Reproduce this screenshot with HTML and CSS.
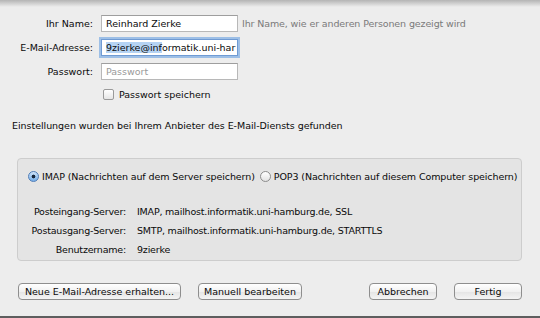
FILE: index.html
```html
<!DOCTYPE html>
<html lang="de">
<head>
    <meta charset="UTF-8">
    <title>E-Mail-Account hinzufügen</title>
    <link rel="stylesheet" href="styles.css">
</head>
<body>
    <div class="sheet">
        <!-- Account fields -->
        <div class="account-form">
            <label class="field-label">Ihr Name:</label>
            <div class="text-field">Reinhard Zierke</div>
            <span class="field-hint">Ihr Name, wie er anderen Personen gezeigt wird</span>

            <label class="field-label">E-Mail-Adresse:</label>
            <div class="text-field focused"><span class="selection">9zierke@inf</span>ormatik.uni-har</div>
            <span></span>

            <label class="field-label">Passwort:</label>
            <div class="text-field placeholder">Passwort</div>
            <span></span>

            <span></span>
            <div class="check-row">
                <span class="checkbox"></span>
                <span>Passwort speichern</span>
            </div>
        </div>

        <p class="status-text">Einstellungen wurden bei Ihrem Anbieter des E-Mail-Diensts gefunden</p>

        <!-- Server settings -->
        <div class="server-box">
            <div class="radio-row">
                <span class="radio-option"><span class="radio on"></span>IMAP (Nachrichten auf dem Server speichern)</span>
                <span class="radio-option"><span class="radio"></span>POP3 (Nachrichten auf diesem Computer speichern)</span>
            </div>
            <div class="server-info">
                <span class="info-label">Posteingang-Server:</span>
                <span>IMAP, mailhost.informatik.uni-hamburg.de, SSL</span>
                <span class="info-label">Postausgang-Server:</span>
                <span>SMTP, mailhost.informatik.uni-hamburg.de, STARTTLS</span>
                <span class="info-label">Benutzername:</span>
                <span>9zierke</span>
            </div>
        </div>

        <!-- Buttons -->
        <div class="button-bar">
            <div class="button-group">
                <button class="btn btn-wide">Neue E-Mail-Adresse erhalten...</button>
                <button class="btn btn-manual">Manuell bearbeiten</button>
            </div>
            <div class="button-group">
                <button class="btn btn-cancel">Abbrechen</button>
                <button class="btn btn-done">Fertig</button>
            </div>
        </div>
    </div>
</body>
</html>
```

FILE: styles.css
```css
* {
    margin: 0;
    padding: 0;
    box-sizing: border-box;
    font-family: 'DejaVu Sans', sans-serif;
}

:root {
    --window-bg: #ededed;
    --box-bg: #e4e4e4;
    --box-border: #cdcdcd;
    --text: #0a0a0a;
    --hint: #7a7a7a;
}

body {
    background-color: var(--window-bg);
    color: var(--text);
    font-size: 9.5px;
}

.sheet {
    width: 540px;
    height: 318px;
    background: linear-gradient(#b4b4b4, var(--window-bg) 7px);
    border-bottom: 2px solid #5e5e5e;
    padding-top: 15px;
}

/* Account fields */
.account-form {
    display: grid;
    grid-template-columns: 93px 137px auto;
    column-gap: 8px;
    row-gap: 7px;
    align-items: center;
}

.field-label {
    text-align: right;
}

.text-field {
    height: 17px;
    border: 1px solid #b8b8b8;
    border-top-color: #9e9e9e;
    background: #ffffff;
    padding: 0 4px;
    line-height: 15px;
    white-space: nowrap;
    overflow: hidden;
}

.text-field.focused {
    border-color: #6f9bd4;
    box-shadow: 0 0 0 2px #9dbfe6;
}

.text-field .selection {
    background-color: #b5d3f3;
}

.text-field.placeholder {
    color: #9a9a9a;
}

.field-hint {
    color: var(--hint);
    margin-left: -4px;
    letter-spacing: -0.12px;
}

.check-row {
    display: flex;
    align-items: center;
    gap: 5px;
    padding-left: 2px;
    margin-top: 2px;
}

.checkbox {
    width: 11px;
    height: 11px;
    border: 1px solid #9a9a9a;
    border-radius: 2px;
    background: linear-gradient(#ffffff, #e6e6e6);
}

.status-text {
    margin: 20px 0 0 12px;
    letter-spacing: -0.04px;
}

/* Server settings */
.server-box {
    margin: 27px 18px 0 17px;
    height: 103px;
    background-color: var(--box-bg);
    border: 1px solid var(--box-border);
    border-radius: 4px;
    padding: 12px 0 0 10px;
    letter-spacing: -0.2px;
    white-space: nowrap;
}

.radio-row {
    display: flex;
    gap: 5px;
    letter-spacing: -0.1px;
}

.radio-option {
    display: flex;
    flex-shrink: 0;
    align-items: center;
    gap: 3px;
}

.radio {
    width: 11px;
    height: 11px;
    border-radius: 50%;
    border: 1px solid #8c8c8c;
    background: linear-gradient(#ffffff, #e2e2e2);
}

.radio.on {
    border-color: #4f7db8;
    background: radial-gradient(circle, #17263b 1.6px, transparent 2.2px), linear-gradient(#cfe3f8, #76aee8);
}

.server-info {
    display: grid;
    grid-template-columns: 98px auto;
    column-gap: 11px;
    row-gap: 8px;
    margin-top: 24px;
}

.info-label {
    text-align: right;
}

/* Buttons */
.button-bar {
    display: flex;
    justify-content: space-between;
    margin: 22px 18px 0 18px;
}

.button-group {
    display: flex;
    gap: 17px;
}

.btn {
    height: 17px;
    border: 1px solid #8e8e8e;
    border-radius: 4px;
    background: linear-gradient(#ffffff, #f1f1f1 50%, #e4e4e4 51%, #f4f4f4);
    font-size: 9.5px;
    color: var(--text);
}

.btn-wide {
    width: 163px;
}

.btn-manual {
    width: 104px;
}

.btn-cancel {
    width: 68px;
}

.btn-done {
    width: 68px;
}
```
